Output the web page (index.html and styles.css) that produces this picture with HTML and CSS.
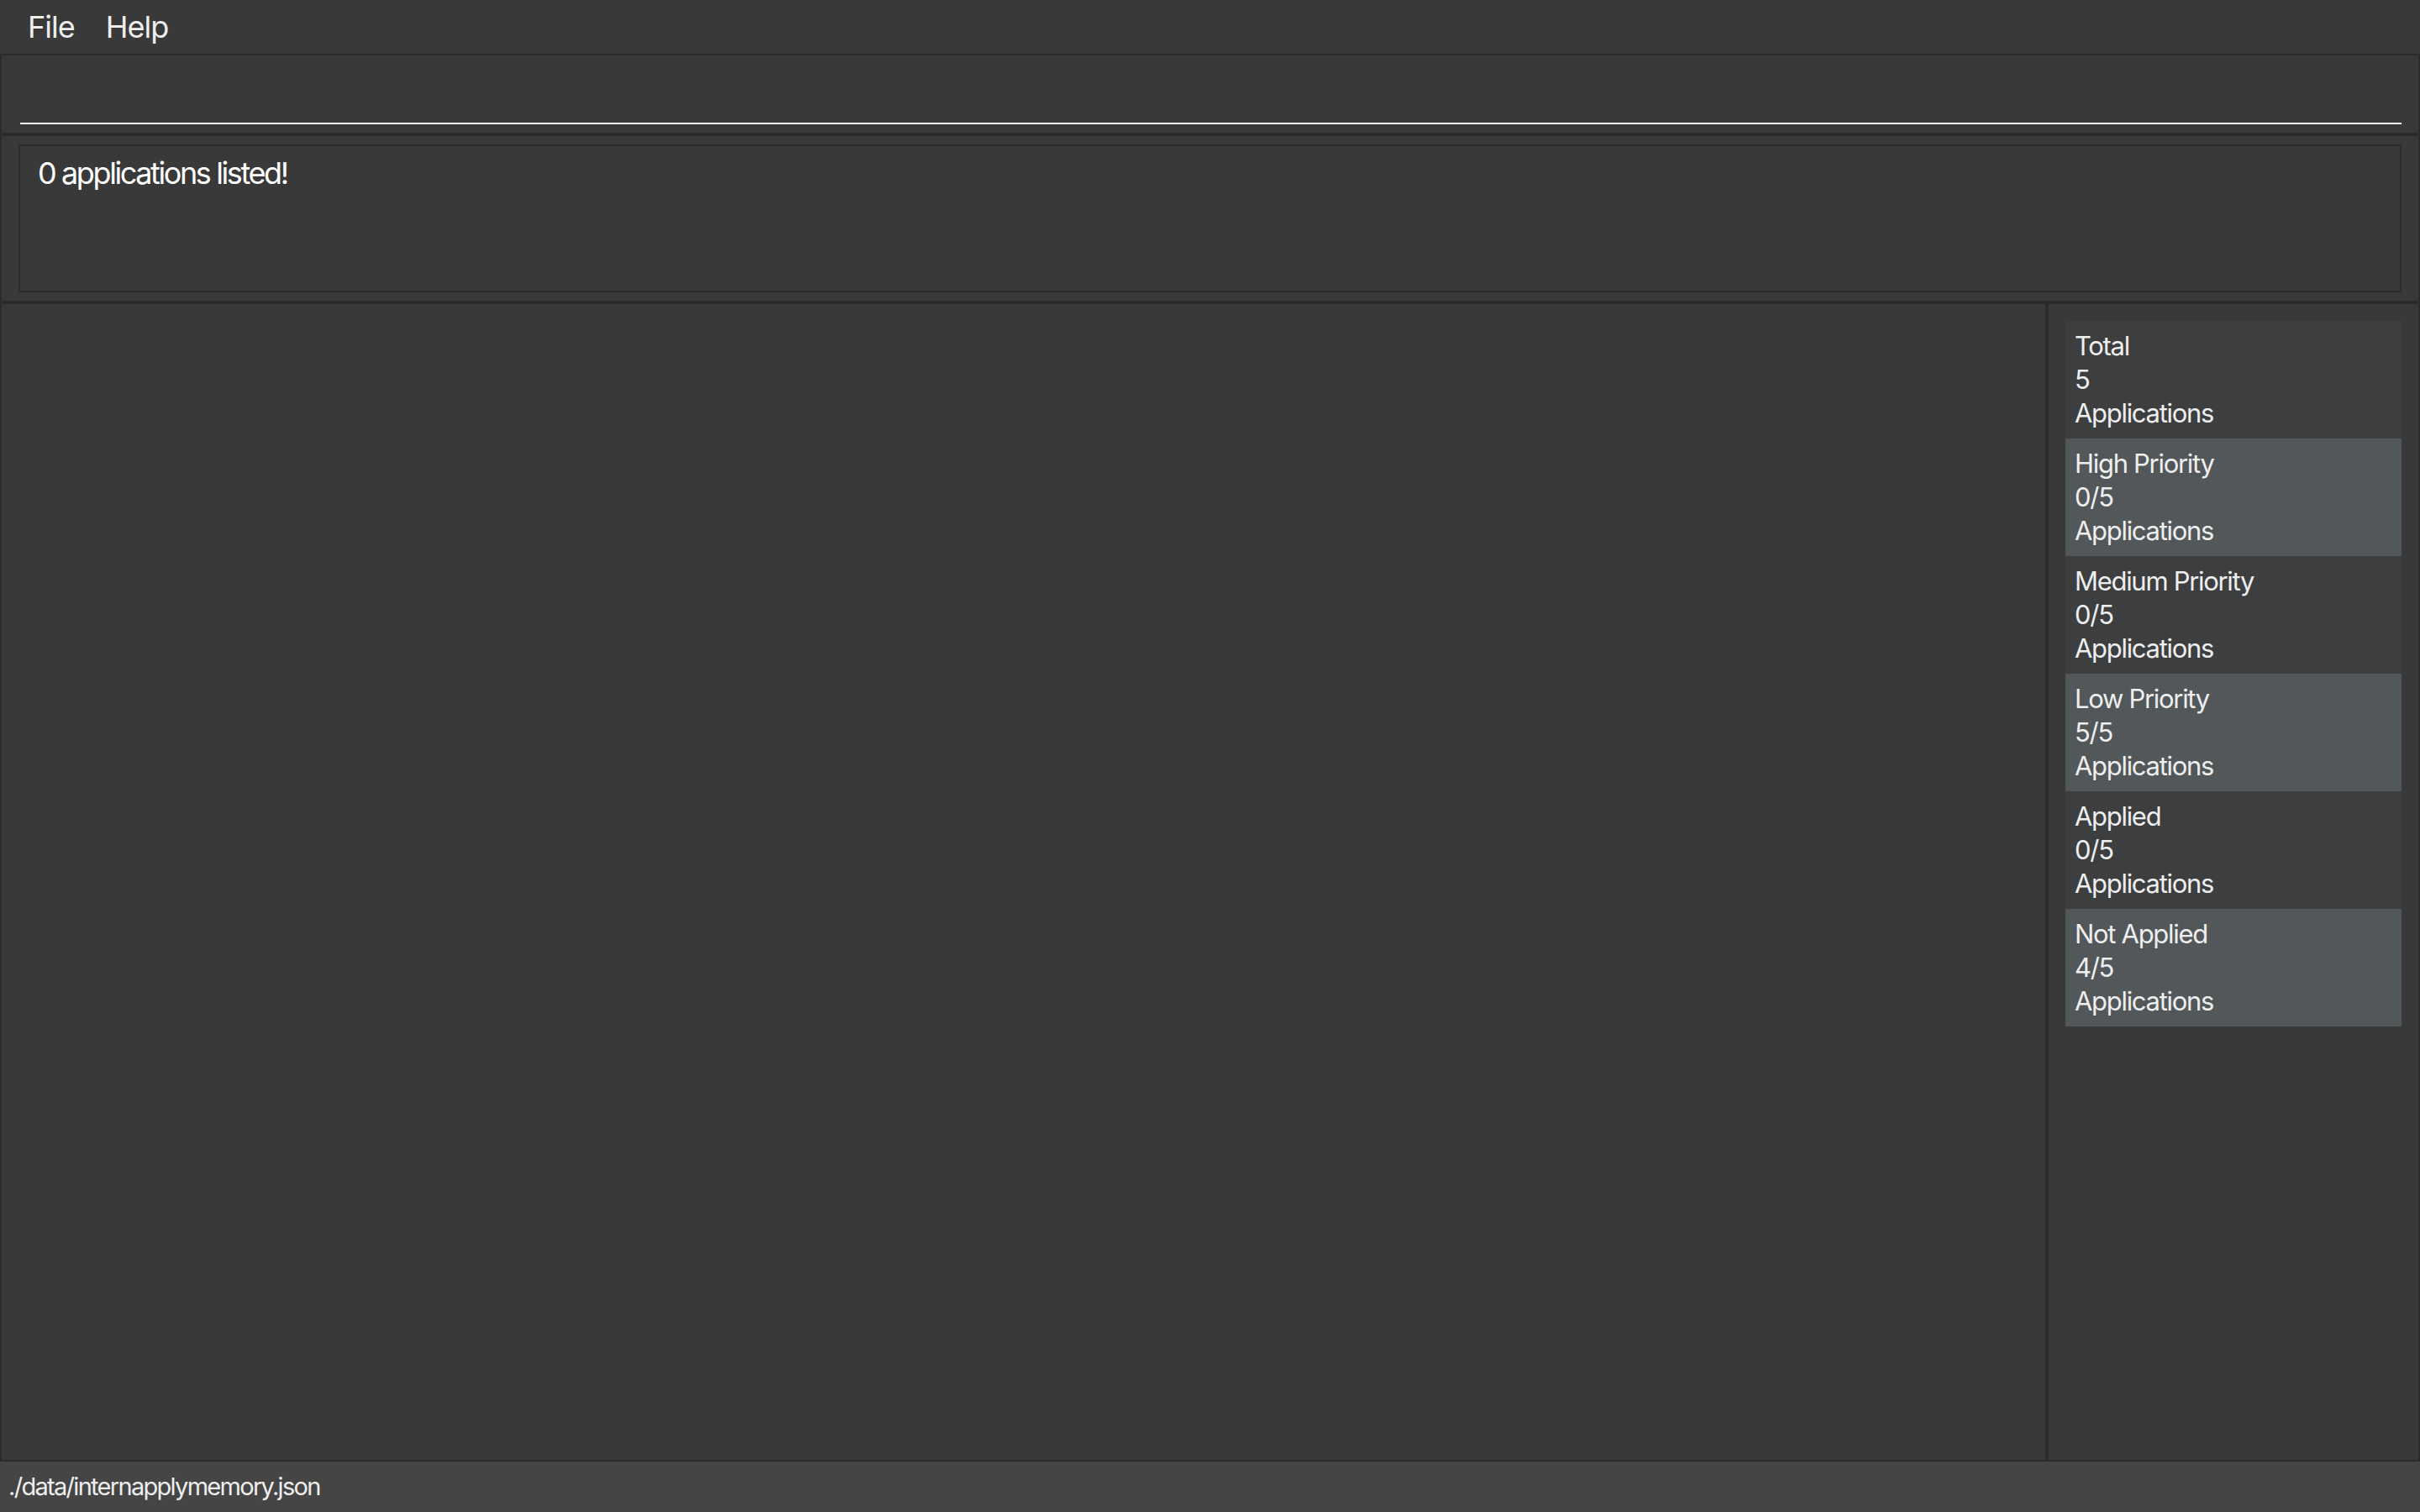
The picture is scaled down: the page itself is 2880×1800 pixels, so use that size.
FILE: index.html
```html
<!DOCTYPE html>
<html lang="en">

<head>
    <meta charset="UTF-8">
    <meta name="viewport" content="width=device-width, initial-scale=1.0">
    <title>InternApply</title>
    <link rel="stylesheet" href="styles.css">
</head>

<body>

    <div class="app">
        <nav class="menubar">
            <span class="menu-item">File</span>
            <span class="menu-item">Help</span>
        </nav>

        <div class="panes">
            <div class="command-pane">
                <div class="command-field"></div>
            </div>

            <div class="result-pane">
                <div class="result-box">0 applications listed!</div>
            </div>

            <div class="main-row">
                <div class="list-pane">
                    <!-- application list is empty -->
                </div>

                <aside class="stats-pane">
                    <div class="stat-card">
                        <div>Total</div>
                        <div>5</div>
                        <div>Applications</div>
                    </div>
                    <div class="stat-card alt">
                        <div>High Priority</div>
                        <div>0/5</div>
                        <div>Applications</div>
                    </div>
                    <div class="stat-card">
                        <div>Medium Priority</div>
                        <div>0/5</div>
                        <div>Applications</div>
                    </div>
                    <div class="stat-card alt">
                        <div>Low Priority</div>
                        <div>5/5</div>
                        <div>Applications</div>
                    </div>
                    <div class="stat-card">
                        <div>Applied</div>
                        <div>0/5</div>
                        <div>Applications</div>
                    </div>
                    <div class="stat-card alt">
                        <div>Not Applied</div>
                        <div>4/5</div>
                        <div>Applications</div>
                    </div>
                </aside>
            </div>
        </div>

        <footer class="status-bar">./data/internapplymemory.json</footer>
    </div>

</body>

</html>
```

FILE: styles.css
```css
* {
    box-sizing: border-box;
}

body {
    font-family: Inter, "Noto Sans", sans-serif;
    margin: 0;
    background-color: #2b2b2b;
    color: #eeeeee;
}

.app {
    display: flex;
    flex-direction: column;
    height: 100vh;
}

.menubar {
    display: flex;
    height: 66px;
    padding-left: 33px;
    gap: 37px;
    background-color: #393939;
    border-bottom: 2px solid #2b2b2b;
}

.menu-item {
    font-size: 36px;
    line-height: 64px;
    letter-spacing: -1px;
}

.panes {
    flex: 1;
    display: flex;
    flex-direction: column;
    gap: 4px;
    padding: 0 2px;
}

.command-pane {
    height: 92px;
    padding: 0 20px 0 22px;
    background-color: #393939;
}

.command-field {
    height: 82px;
    border-bottom: 2px solid #ffffff;
}

.result-pane {
    height: 196px;
    padding: 10px 20px;
    background-color: #393939;
}

.result-box {
    height: 100%;
    padding: 10px 21px;
    border: 2px solid #2b2b2b;
    color: #ffffff;
    font-size: 36px;
    letter-spacing: -2.4px;
}

.main-row {
    flex: 1;
    display: flex;
    gap: 4px;
}

.list-pane {
    flex: 1;
    background-color: #393939;
}

.stats-pane {
    width: 440px;
    padding: 20px;
    background-color: #393939;
}

.stat-card {
    height: 140px;
    padding: 10px 11px;
    background-color: #3d3e40;
    font-size: 31px;
    line-height: 40px;
    letter-spacing: -1.3px;
}

.stat-card.alt {
    background-color: #52575a;
}

.status-bar {
    height: 62px;
    padding-left: 10px;
    border-top: 2px solid #2b2b2b;
    background-color: #454545;
    font-size: 29px;
    line-height: 60px;
    letter-spacing: -1.7px;
}
```
